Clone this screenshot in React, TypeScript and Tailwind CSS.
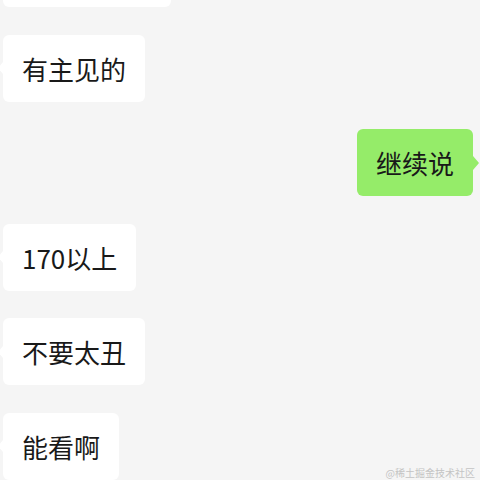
import React from 'react';

type Msg = { id: number; text: string; mine?: boolean; width?: string };

const messages: Msg[] = [
  // only the bottom edge of this bubble is on screen
  { id: 1, text: '', width: 'w-[168px]' },
  { id: 2, text: '有主见的' },
  { id: 3, text: '继续说', mine: true },
  { id: 4, text: '170以上' },
  { id: 5, text: '不要太丑' },
  { id: 6, text: '能看啊' },
];

const Bubble: React.FC<{ msg: Msg }> = ({ msg }) => {
  if (msg.mine) {
    return (
      <div className="flex justify-end pr-[7px]">
        <div className="relative h-[67px] px-[19px] flex items-center rounded-[6px] bg-[#95ec69] text-[26px] text-[#191919]">
          {msg.text}
          {/* tail */}
          <div className="absolute right-[-6px] top-1/2 -translate-y-1/2 w-0 h-0 border-y-[7px] border-y-transparent border-l-[6px] border-l-[#95ec69]" />
        </div>
      </div>
    );
  }
  return (
    <div className="flex justify-start pl-[3px]">
      <div
        className={`relative h-[67px] px-[19px] flex items-center rounded-[6px] bg-white text-[26px] text-[#191919] ${msg.width ?? ''}`}
      >
        {msg.text}
        <div className="absolute left-[-5px] top-1/2 -translate-y-1/2 w-0 h-0 border-y-[6px] border-y-transparent border-r-[5px] border-r-white" />
      </div>
    </div>
  );
};

export default function App() {
  return (
    <div
      className="relative w-[480px] h-[480px] overflow-hidden bg-[#f5f5f5]"
      style={{ fontFamily: '"Noto Sans CJK SC", "Noto Sans", sans-serif' }}
    >
      <div className="flex flex-col gap-[27.5px] mt-[-60px]">
        {messages.map((m) => (
          <Bubble key={m.id} msg={m} />
        ))}
      </div>

      {/* watermark */}
      <div className="absolute right-[5px] bottom-[2px] text-[10px] leading-none text-[#c4c4c4]">
        @稀土掘金技术社区
      </div>
    </div>
  );
}
